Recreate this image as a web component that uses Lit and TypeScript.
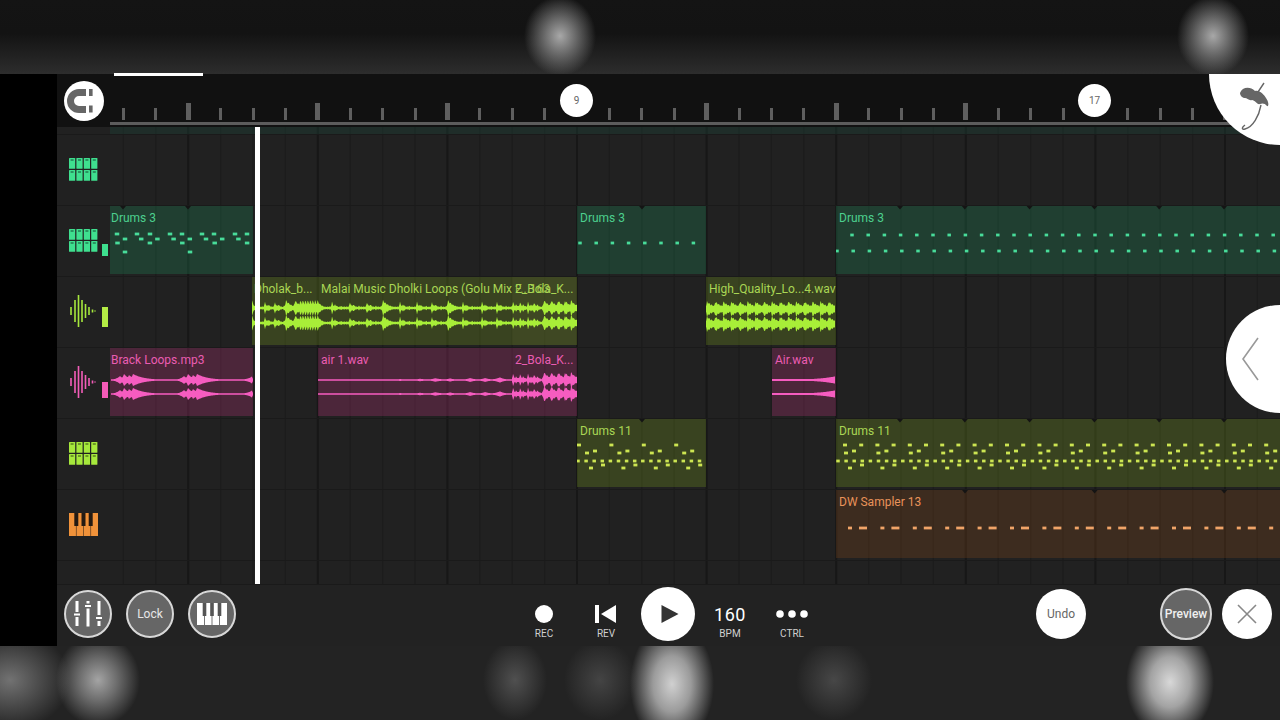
import { LitElement, css, html, svg } from 'lit';
import { customElement } from 'lit/decorators.js';

const LANE_X = 110;
const ROW_H = 71;
const BEAT = 32.4;

type Hit = [number, number, number, number?];
type Note = [number, number, number?];

interface Wave {
  from: number;
  to: number;
  cy: number[];
  hits: Hit[];
  floor: number;
  rough?: number;
}

interface Clip {
  x: number;
  end: number;
  kind: string;
  label?: string;
  labelX?: number;
  notes?: Note[];
  marks?: number[];
  waves?: Wave[];
}

// row of evenly spaced notes, given by centre x on screen
const seq = (start: number, step: number, end: number, y: number, w = 4): Note[] => {
  const out: Note[] = [];
  for (let x = start; x < end; x += step) out.push([x, y, w]);
  return out;
};

const each = (start: number, step: number, end: number) => {
  const out: number[] = [];
  for (let x = start; x < end; x += step) out.push(x);
  return out;
};

const envAt = (x: number, w: Wave) => {
  let v = w.floor;
  for (const [hx, amp, decay, attack] of w.hits) {
    const d = x - hx;
    const e = d >= 0 ? amp * Math.exp(-d / decay) : amp * Math.exp(d / (attack ?? 1));
    if (e > v) v = e;
  }
  // a bit of ripple so the shapes don't read as clean arrows
  const rough = w.rough ?? 0;
  return v * (1 - rough + rough * Math.abs(Math.sin(x * 1.3)));
};

const wavePath = (w: Wave, cy: number, offset: number) => {
  const top: string[] = [];
  const bot: string[] = [];
  for (let x = w.from; x <= w.to; x += 0.5) {
    const e = envAt(x, w);
    top.push(`${(x - offset).toFixed(1)} ${(cy - e).toFixed(1)}`);
    bot.unshift(`${(x - offset).toFixed(1)} ${(cy + e).toFixed(1)}`);
  }
  return `M${top.join('L')}L${bot.join('L')}Z`;
};

// thin spike with a short tail, and the fat kind
const spike = (x: number): Hit[] => [[x, 6.5, 1.8], [x + 3, 3.8, 3.5, 1.5], [x + 9, 2.4, 2, 1.5]];
const fat = (x: number): Hit[] => [[x, 8, 6, 1.2]];

const bolaHits: Hit[] = [
  ...spike(513), ...spike(520), ...spike(528), ...spike(534),
  ...fat(544), ...fat(551), ...fat(558), ...fat(565), ...fat(571),
];

const dholakHits: Hit[] = [
  ...spike(265), ...spike(275), ...fat(286), ...fat(295),
  ...each(300, 2.5, 318).map((x): Hit => [x, 8, 4]),
  ...spike(332), ...spike(350), ...spike(367), ...fat(383), ...spike(400),
  ...spike(417), ...spike(432), ...fat(448), ...spike(463), ...spike(482), ...spike(497),
  ...bolaHits,
];

const swell = (x: number): Hit[] => [[x - 4, 4, 4, 4], [x, 6, 5, 2], [x + 5, 5, 5, 2], [x + 9, 6, 11, 2]];

const CLIPS: Clip[][] = [
  [],
  [
    {
      x: 110, end: 253, kind: 'mint', label: 'Drums 3', labelX: 1, marks: [123, 188],
      notes: [
        ...[117, 137, 150, 170, 182, 202, 214, 235, 247].map((x): Note => [x, 234, 4.5]),
        ...seq(125, 16.2, 245, 239, 4.5),
        ...seq(117.5, 32.4, 250, 243, 4.5),
        [125, 252, 4.5], [190, 252, 4.5],
      ],
    },
    { x: 577, end: 706, kind: 'mint', label: 'Drums 3', marks: [642], notes: seq(580, 16.2, 700, 243, 3.5) },
    {
      x: 836, end: 1280, kind: 'mint', label: 'Drums 3', marks: each(900, 64.8, 1280),
      notes: [...seq(852, 16.2, 1280, 235, 3.5), ...seq(837, 16.2, 1280, 251, 3.5)],
    },
  ],
  [
    {
      x: 252, end: 318, kind: 'lime', label: 'Dholak_b...', labelX: 2,
      waves: [{ from: 252, to: 318, cy: [308, 323], hits: [[252, 8, 2], ...dholakHits], floor: 1.4, rough: 0.3 }],
    },
    {
      x: 318, end: 512, kind: 'lime', label: 'Malai Music Dholki Loops (Golu Mix F...163',
      waves: [{ from: 318, to: 512, cy: [308, 323], hits: dholakHits, floor: 1.4, rough: 0.3 }],
    },
    {
      x: 512, end: 577, kind: 'limeOver', label: '2_Bola_K...', labelX: 3,
      waves: [{ from: 512, to: 577, cy: [308, 323], hits: dholakHits, floor: 1.4, rough: 0.3 }],
    },
    {
      x: 706, end: 836, kind: 'lime', label: 'High_Quality_Lo...4.wav',
      waves: [{ from: 706, to: 835, cy: [309, 324], hits: each(707, 8.1, 836).map((x): Hit => [x, 8, 8]), floor: 2.5, rough: 0.3 }],
    },
  ],
  [
    {
      x: 110, end: 253, kind: 'pink', label: 'Brack Loops.mp3', labelX: 1,
      waves: [{
        from: 111, to: 253, cy: [380, 394], floor: 0.8,
        hits: [...swell(124), ...swell(188), [252, 3.5, 1, 5]],
      }],
    },
    {
      x: 318, end: 512, kind: 'pink', label: 'air 1.wav',
      waves: [{
        from: 318, to: 512, cy: [380, 394], floor: 0.7,
        hits: [
          [400, 1, 8, 5], [420, 1.3, 8, 5], [435, 1.8, 8, 5], [450, 1.6, 6, 5],
          [470, 2, 6, 5], [485, 2, 6, 5], [500, 2.6, 5, 6],
        ],
      }],
    },
    {
      x: 512, end: 577, kind: 'pink', label: '2_Bola_K...', labelX: 3,
      waves: [{ from: 512, to: 577, cy: [380, 394], hits: bolaHits, floor: 0.8, rough: 0.25 }],
    },
    {
      x: 772, end: 836, kind: 'pink', label: 'Air.wav',
      waves: [{ from: 772, to: 835, cy: [380, 394], hits: [[835, 3.6, 1, 18]], floor: 0.9 }],
    },
  ],
  [
    {
      x: 577, end: 706, kind: 'olive', label: 'Drums 11', marks: [642],
      notes: [
        ...seq(579, 32.4, 700, 445),
        ...seq(595, 32.4, 700, 451),
        ...seq(587, 32.4, 700, 453),
        ...seq(578, 8.1, 704, 461, 3.5),
        ...seq(603, 32.4, 704, 465),
        ...seq(591, 32.4, 700, 468),
      ],
    },
    {
      x: 836, end: 1280, kind: 'olive', label: 'Drums 11', marks: each(900, 64.8, 1280),
      notes: [
        ...seq(845, 16.2, 1280, 445),
        ...seq(854, 32.4, 1280, 451),
        ...seq(846, 32.4, 1280, 453),
        ...seq(838, 8.1, 1280, 461, 3.5),
        ...seq(862, 32.4, 1280, 465),
        ...seq(850, 32.4, 1280, 468),
      ],
    },
  ],
  [
    {
      x: 836, end: 1280, kind: 'amber', label: 'DW Sampler 13', marks: each(965, 129.6, 1280),
      notes: [...seq(850, 32.4, 1280, 528, 4), ...seq(863, 32.4, 1280, 528, 8)],
    },
  ],
];

const ICONS: [string, string, string][] = [
  ['pads', '#3fdf8f', '#1d6b48'],
  ['pads', '#3fdf8f', '#1d6b48'],
  ['wave', '#a6e83c', ''],
  ['wave', '#f35cb8', ''],
  ['pads', '#a6e83c', '#4d6b1a'],
  ['keys', '#f0923a', ''],
];

@customElement('app-root')
export class AppRoot extends LitElement {
  static styles = css`
    :host {
      display: flex;
      flex-direction: column;
      width: 1280px;
      height: 720px;
      overflow: hidden;
      background: #222;
      font-family: Roboto, 'Liberation Sans', sans-serif;
    }
    .band-top {
      height: 74px;
      flex: none;
      background:
        radial-gradient(ellipse 36px 40px at 560px 36px, #a8a8a8 0%, rgba(140, 140, 140, 0.75) 40%, rgba(120, 120, 120, 0) 100%),
        radial-gradient(ellipse 36px 40px at 1213px 36px, #a8a8a8 0%, rgba(140, 140, 140, 0.75) 40%, rgba(120, 120, 120, 0) 100%),
        linear-gradient(180deg, #141414 0%, #131313 45%, #2d2d2d 100%);
    }
    .band-bottom {
      height: 74px;
      flex: none;
      background:
        radial-gradient(ellipse 42px 62px at 672px 38px, #d0d0d0 0%, rgba(185, 185, 185, 0.8) 45%, rgba(180, 180, 180, 0) 100%),
        radial-gradient(ellipse 44px 56px at 1170px 36px, #d8d8d8 0%, rgba(195, 195, 195, 0.8) 45%, rgba(180, 180, 180, 0) 100%),
        radial-gradient(ellipse 42px 46px at 98px 34px, #a4a4a4 0%, rgba(140, 140, 140, 0.7) 45%, rgba(140, 140, 140, 0) 100%),
        radial-gradient(ellipse 60px 50px at 10px 34px, #727272 0%, rgba(100, 100, 100, 0) 100%),
        radial-gradient(ellipse 32px 40px at 515px 34px, #505050 0%, rgba(70, 70, 70, 0) 100%),
        radial-gradient(ellipse 36px 40px at 600px 34px, #444 0%, rgba(60, 60, 60, 0) 100%),
        radial-gradient(ellipse 38px 40px at 834px 34px, #474747 0%, rgba(60, 60, 60, 0) 100%),
        #232323;
    }
    .main {
      position: relative;
      flex: none;
      height: 572px;
      display: flex;
      background: #000;
    }
    .app {
      margin-left: 57px;
      flex: 1;
      display: flex;
      flex-direction: column;
      min-width: 0;
    }
    .progress {
      position: absolute;
      left: 114px;
      top: -1px;
      width: 89px;
      height: 3px;
      background: #fff;
    }

    .ruler {
      height: 53px;
      flex: none;
      display: flex;
      background: #111;
    }
    .corner {
      width: 53px;
      flex: none;
      display: flex;
      justify-content: center;
      padding-top: 7px;
      box-sizing: border-box;
    }
    .snap {
      width: 40px;
      height: 40px;
      border-radius: 50%;
      background: #fff;
      margin-left: 1px;
    }
    .lane-head {
      position: relative;
      flex: 1;
    }
    .rule-line {
      position: absolute;
      left: 0;
      right: 0;
      top: 48px;
      height: 3px;
      background: #5c5c5c;
    }
    .tick {
      position: absolute;
      top: 34px;
      width: 3px;
      height: 12px;
      background: #5f5f5f;
    }
    .tick.major {
      top: 29px;
      width: 5px;
      height: 17px;
    }
    .bar-no {
      position: absolute;
      top: 10px;
      width: 33px;
      height: 33px;
      border-radius: 50%;
      background: #fff;
      color: #666;
      font-size: 10px;
      display: flex;
      align-items: center;
      justify-content: center;
    }
    .logo {
      position: absolute;
      left: 1209px;
      top: 0;
      width: 71px;
      height: 71px;
      background: #fff;
      border-bottom-left-radius: 71px;
      overflow: hidden;
    }
    .pull {
      position: absolute;
      left: 1226px;
      top: 231px;
      width: 54px;
      height: 108px;
      background: #fff;
      border-radius: 54px 0 0 54px;
    }

    .tracks {
      position: relative;
      flex: 1;
      background: #212121;
      min-height: 0;
    }
    .grid {
      position: absolute;
      left: 53px;
      top: 0;
      width: 1170px;
      height: 457px;
    }
    .stripe {
      height: 8px;
      margin-left: 53px;
      background: rgba(30, 70, 56, 0.35);
      position: relative;
    }
    .row {
      position: relative;
      height: 71px;
      display: flex;
      box-sizing: border-box;
    }
    .row.rule {
      height: 23px;
    }
    .row-line {
      position: absolute;
      left: 0;
      right: 0;
      top: -1px;
      height: 1px;
      background: #1a1a1a;
    }
    .head {
      position: relative;
      width: 53px;
      flex: none;
      display: flex;
      align-items: center;
      justify-content: center;
      padding: 0 1px 3px 0;
      box-sizing: border-box;
    }
    .meter {
      position: absolute;
      left: 45px;
      width: 6px;
    }
    .lane {
      position: relative;
      flex: 1;
    }
    .clip {
      position: absolute;
      top: 0;
      height: 68px;
    }
    .clip svg {
      position: absolute;
      left: 0;
      top: 0;
      width: 100%;
      height: 100%;
    }
    .clip-label {
      position: absolute;
      top: 5px;
      font-size: 12px;
      line-height: 14px;
      white-space: nowrap;
    }
    .mint { background: rgba(30, 134, 85, 0.3); color: #4ccf8e; }
    .lime { background: rgba(114, 147, 31, 0.3); color: #a9d654; }
    .limeOver { background: rgba(127, 154, 41, 0.32); color: #a9d654; }
    .pink { background: rgba(175, 50, 115, 0.3); color: #ea5cb2; }
    .olive { background: rgba(114, 147, 31, 0.3); color: #a9d654; }
    .amber { background: rgba(125, 70, 25, 0.3); color: #e9935a; }
    .playhead {
      position: absolute;
      left: 198px;
      top: 0;
      bottom: 0;
      width: 5px;
      background: #fff;
    }

    .toolbar {
      height: 62px;
      flex: none;
      display: flex;
      align-items: center;
      background: #222;
      border-top: 1px solid #1a1a1a;
      box-sizing: border-box;
      padding: 0 0 3px 7px;
    }
    .tools {
      display: flex;
      gap: 14px;
      width: 179px;
      margin-right: 270px;
      flex: none;
    }
    .round {
      width: 48px;
      height: 48px;
      box-sizing: border-box;
      border-radius: 50%;
      background: #666;
      border: 2px solid #d8d8d8;
      display: flex;
      align-items: center;
      justify-content: center;
      color: #e6e6e6;
      font-size: 12px;
      flex: none;
    }
    .transport {
      display: flex;
      flex: none;
      width: 311px;
    }
    .cell {
      position: relative;
      width: 62px;
      height: 58px;
      display: flex;
      flex-direction: column;
      align-items: center;
      color: #fff;
      flex: none;
    }
    .cell-top {
      height: 28px;
      display: flex;
      align-items: center;
      justify-content: center;
      margin-top: 15px;
    }
    .cell-label {
      font-size: 10px;
      line-height: 12px;
      color: #d0d0d0;
      margin-top: 0;
    }
    .rec {
      width: 18px;
      height: 18px;
      border-radius: 50%;
      background: #fff;
    }
    .bpm {
      font-size: 18px;
      letter-spacing: 0.6px;
    }
    .play {
      width: 54px;
      height: 54px;
      border-radius: 50%;
      background: #fff;
      margin-top: 2px;
      display: flex;
      align-items: center;
      justify-content: center;
    }
    .white {
      width: 50px;
      height: 50px;
      border-radius: 50%;
      background: #fff;
      color: #666;
      font-size: 12px;
      display: flex;
      align-items: center;
      justify-content: center;
      flex: none;
    }
    .undo {
      margin-left: 212px;
    }
    .preview {
      width: 52px;
      height: 52px;
      margin-left: 74px;
      font-size: 12px;
      font-weight: 500;
      color: #f0f0f0;
    }
    .close {
      margin-left: 10px;
    }
  `;

  private renderIcon(kind: string, color: string, notch: string) {
    if (kind === 'wave') {
      const bars: [number, number][] = [[2, 8], [6, 22], [9.5, 32], [13, 22], [16.5, 14], [20, 8], [23.5, 3], [26, 1]];
      return html`<svg width="29" height="34" viewBox="0 0 29 34">
        ${bars.map(([x, h]) => svg`<rect x=${x - 0.8} y=${17 - h / 2} width="1.6" height=${h} fill=${color}></rect>`)}
      </svg>`;
    }
    if (kind === 'keys') {
      return html`<svg width="29" height="23" viewBox="0 0 29 23">
        <rect width="29" height="23" fill=${color}></rect>
        ${[7.3, 14.5, 21.7].map(
          (x) => svg`<rect x=${x - 2} y="0" width="4" height="13" fill="#241a12"></rect>
            <rect x=${x - 0.4} y="13" width="0.8" height="10" fill="#6b4320"></rect>`
        )}
      </svg>`;
    }
    const cells: unknown[] = [];
    for (const y of [0, 12]) {
      for (let i = 0; i < 4; i++) {
        const x = i * 7.4;
        cells.push(svg`<rect x=${x} y=${y} width="6.2" height="10.8" rx="0.6" fill=${color}></rect>
          <rect x=${x + 1.6} y=${y + 1.2} width="3" height="1.6" fill=${notch} opacity="0.8"></rect>`);
      }
    }
    return html`<svg width="29" height="23" viewBox="0 0 29 23">${cells}</svg>`;
  }

  private renderClip(c: Clip, rowIndex: number) {
    const rowTop = 135 + rowIndex * ROW_H;
    const w = c.end - c.x;
    const style = `left:${c.x - LANE_X}px;width:${w}px`;
    const fill: Record<string, string> = {
      mint: '#48dc9a',
      olive: '#cde552',
      amber: '#f0a468',
      lime: '#a8ee38',
      limeOver: '#a8ee38',
      pink: '#f65cc0',
    };
    return html`<div class="clip ${c.kind}" style=${style}>
      <svg viewBox="0 0 ${w} 68" style="overflow:hidden">
        ${(c.marks ?? []).map(
          (m) => svg`<path d="M${m - c.x - 3} 0h6l-3 3.5z" fill="#141414"></path>`
        )}
        ${(c.notes ?? []).map(
          ([x, y, nw]) => svg`<rect x=${x - c.x - (nw ?? 4) / 2} y=${y - rowTop - 1.4} width=${nw ?? 4} height="2.8" fill=${fill[c.kind]}></rect>`
        )}
        ${(c.waves ?? []).map((wave) =>
          wave.cy.map(
            (cy) => svg`<path d=${wavePath(wave, cy - rowTop, c.x)} fill=${fill[c.kind]}></path>`
          )
        )}
      </svg>
      ${c.label ? html`<span class="clip-label" style="left:${c.labelX ?? 3}px">${c.label}</span>` : ''}
    </div>`;
  }

  private renderGrid() {
    const lines = [];
    for (let i = 0; i < 36; i++) {
      const x = 13.4 + i * BEAT;
      const major = i % 4 === 2;
      lines.push(svg`<rect x=${x - (major ? 1 : 0.6)} y="0" width=${major ? 2 : 1.2} height="457" fill=${major ? '#171717' : '#1c1c1c'}></rect>`);
    }
    return html`<svg class="grid" viewBox="0 0 1170 457">${lines}</svg>`;
  }

  private renderRuler() {
    const items = [];
    for (let i = 0; i < 36; i++) {
      const x = 13.4 + i * BEAT;
      const major = i % 4 === 2;
      if (i === 14 || i === 30) continue;
      items.push(html`<div class="tick ${major ? 'major' : ''}" style="left:${x - (major ? 2.5 : 1.5)}px"></div>`);
    }
    return items;
  }

  render() {
    const meters = [
      null,
      { top: 38, h: 12, c: '#3fdf8f' },
      { top: 30, h: 20, c: '#b4ec45' },
      { top: 34, h: 16, c: '#f35cb8' },
    ];
    return html`
      <div class="band-top"></div>
      <div class="main">
        <div class="app">
          <div class="ruler">
            <div class="corner">
              <div class="snap">
                <svg width="40" height="40" viewBox="64 80 40 40">
                  <path d="M86 91.5H79a8.5 8.5 0 0 0 0 17H86" fill="none" stroke="#666" stroke-width="7"></path>
                  <rect x="89" y="88" width="3.6" height="7" fill="#666"></rect>
                  <rect x="89" y="104.5" width="3.6" height="7" fill="#666"></rect>
                </svg>
              </div>
            </div>
            <div class="lane-head">
              <div class="rule-line"></div>
              ${this.renderRuler()}
              <div class="bar-no" style="left:450px">9</div>
              <div class="bar-no" style="left:968px">17</div>
            </div>
          </div>
          <div class="tracks">
            ${this.renderGrid()}
            <div class="stripe"></div>
            ${CLIPS.map(
              (clips, i) => html`<div class="row">
                <div class="row-line"></div>
                <div class="head">
                  ${this.renderIcon(ICONS[i][0], ICONS[i][1], ICONS[i][2])}
                  ${meters[i]
                    ? html`<div class="meter" style="top:${meters[i]!.top}px;height:${meters[i]!.h}px;background:${meters[i]!.c}"></div>`
                    : ''}
                </div>
                <div class="lane">${clips.map((c) => this.renderClip(c, i))}</div>
              </div>`
            )}
            <div class="row rule"><div class="row-line"></div></div>
            <div class="playhead"></div>
          </div>
          <div class="toolbar">
            <div class="tools">
              <div class="round">
                <svg width="32" height="28" viewBox="0 0 32 28" fill="#fff">
                  <rect x="3.5" y="1" width="3" height="11"></rect>
                  <rect x="2" y="13.5" width="6" height="2"></rect>
                  <rect x="3.5" y="17" width="3" height="9"></rect>
                  <rect x="14.5" y="1" width="3" height="2.5"></rect>
                  <rect x="13" y="5" width="6" height="2"></rect>
                  <rect x="14.5" y="8.5" width="3" height="18"></rect>
                  <rect x="25.5" y="1" width="3" height="14"></rect>
                  <rect x="24" y="17" width="6" height="2"></rect>
                  <rect x="25.5" y="21" width="3" height="5"></rect>
                </svg>
              </div>
              <div class="round">Lock</div>
              <div class="round">
                <svg width="30" height="22" viewBox="0 0 30 22">
                  <rect width="30" height="22" fill="#fff"></rect>
                  ${[7.5, 15, 22.5].map(
                    (x) => svg`<rect x=${x - 1.8} y="0" width="3.6" height="13" fill="#555"></rect>
                      <rect x=${x - 0.5} y="13" width="1" height="9" fill="#777"></rect>`
                  )}
                </svg>
              </div>
            </div>
            <div class="transport">
              <div class="cell">
                <div class="cell-top"><div class="rec"></div></div>
                <div class="cell-label">REC</div>
              </div>
              <div class="cell">
                <div class="cell-top">
                  <svg width="22" height="20" viewBox="0 0 22 20" fill="#fff">
                    <rect x="0" y="1" width="4" height="18"></rect>
                    <path d="M21 1V19L6 10Z"></path>
                  </svg>
                </div>
                <div class="cell-label">REV</div>
              </div>
              <div class="cell">
                <div class="play">
                  <svg width="18" height="20" viewBox="0 0 18 20" style="margin-left:3px">
                    <path d="M0.5 1V19L17.5 10Z" fill="#333"></path>
                  </svg>
                </div>
              </div>
              <div class="cell">
                <div class="cell-top bpm">160</div>
                <div class="cell-label">BPM</div>
              </div>
              <div class="cell">
                <div class="cell-top">
                  <svg width="32" height="10" viewBox="0 0 32 10" fill="#fff">
                    <circle cx="4" cy="5" r="3.8"></circle>
                    <circle cx="16" cy="5" r="3.8"></circle>
                    <circle cx="28" cy="5" r="3.8"></circle>
                  </svg>
                </div>
                <div class="cell-label">CTRL</div>
              </div>
            </div>
            <div class="white undo">Undo</div>
            <div class="round preview">Preview</div>
            <div class="white close">
              <svg width="22" height="22" viewBox="0 0 22 22">
                <path d="M2 2L20 20M20 2L2 20" stroke="#888" stroke-width="1.6" fill="none"></path>
              </svg>
            </div>
          </div>
        </div>
        <div class="progress"></div>
        <div class="logo">
          <svg width="71" height="71" viewBox="1209 74 71 71">
            <path d="M1240 93C1242 87 1250 86 1255 91C1260 90 1264 95 1266 98C1269 102 1269 107 1267 106C1265 103 1262 103 1260 104C1257 105 1255 100 1252 100C1249 101 1247 98 1245 98C1243 98 1240 96 1240 93Z" fill="#666"></path>
            <path d="M1264 83L1258 92M1261 105C1259 116 1253 127 1245 129C1241 130 1242 127 1245 125" fill="none" stroke="#666" stroke-width="1.4"></path>
          </svg>
        </div>
        <div class="pull">
          <svg width="54" height="108" viewBox="1226 305 54 108">
            <path d="M1258 338L1243 359L1258 380" fill="none" stroke="#999" stroke-width="1.6"></path>
          </svg>
        </div>
      </div>
      <div class="band-bottom"></div>
    `;
  }
}
